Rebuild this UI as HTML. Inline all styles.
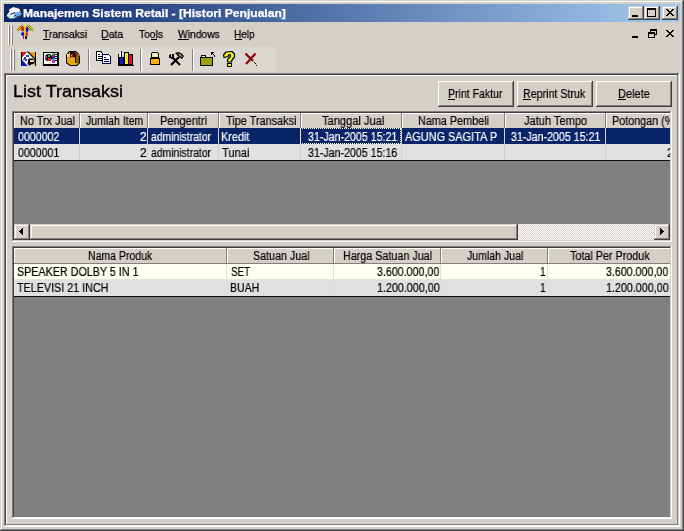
<!DOCTYPE html>
<html><head><meta charset="utf-8"><style>
html,body{margin:0;padding:0;width:684px;height:531px;overflow:hidden;background:#D4D0C8;}
body{position:relative;font-family:'Liberation Sans', sans-serif;}
div{position:absolute;will-change:transform;}
</style></head><body>
<div style="left:1px;top:1px;width:682px;height:1px;background:#FFFFFF;"></div>
<div style="left:1px;top:1px;width:1px;height:529px;background:#FFFFFF;"></div>
<div style="left:682px;top:1px;width:1px;height:529px;background:#808080;"></div>
<div style="left:1px;top:529px;width:682px;height:1px;background:#808080;"></div>
<div style="left:683px;top:0px;width:1px;height:531px;background:#404040;"></div>
<div style="left:0px;top:530px;width:684px;height:1px;background:#404040;"></div>
<div style="left:4px;top:4px;width:676px;height:18px;background:linear-gradient(to right,#0A246A,#A6CAF0);"></div>
<svg style="position:absolute;left:4px;top:4px" width="18" height="18" viewBox="0 0 18 18"><path d="M4.9 7.7 L4.9 5 L9.4 2.8 L15 4.3 L16.2 5.8 L17.7 10.3 L16.6 11.4 L10.2 14.8 L5.6 14.8 L2.3 11.4 Z" fill="#F4F8FF"/>
<path d="M10.5 9 L16.5 7 L17.7 10.3 L16.6 11.4 L10.2 14.8 L9 13 Z" fill="#70A8F0"/>
<path d="M2.3 11.4 L5.6 14.8 L7.5 14.5 L6 11 L3.5 10.5 Z" fill="#B8F0E0"/>
<path d="M4.9 7.7 L4.9 5 L9.4 2.8 L15 4.3 L16.2 5.8 L17.7 10.3 L16.6 11.4 L10.2 14.8 L5.6 14.8 L2.3 11.4 Z" fill="none" stroke="#000" stroke-width="1" stroke-dasharray="1.1 1.1"/>
<path d="M6 10.5 L11 8.5" stroke="#203070" stroke-width="1.3"/><path d="M11 11 L14 13" stroke="#000" stroke-width="1" stroke-dasharray="1 1"/></svg>
<div style="left:23.48px;top:8px;font:bold 11px/11px 'Liberation Sans', sans-serif;color:#FFFFFF;white-space:nowrap;transform:scaleX(1.0999);transform-origin:0 0;-webkit-text-stroke:0.25px #FFFFFF;">Manajemen Sistem Retail - [Histori Penjualan]</div>
<div style="left:628px;top:6px;width:16px;height:14px;background:#D4D0C8;box-shadow:inset -1px -1px #404040,inset 1px 1px #D4D0C8,inset -2px -2px #808080,inset 2px 2px #FFFFFF;"></div>
<svg style="position:absolute;left:628px;top:6px" width="16" height="14" viewBox="0 0 16 14" shape-rendering="crispEdges"><rect x="4" y="9" width="6" height="2" fill="#000"/></svg>
<div style="left:644px;top:6px;width:16px;height:14px;background:#D4D0C8;box-shadow:inset -1px -1px #404040,inset 1px 1px #D4D0C8,inset -2px -2px #808080,inset 2px 2px #FFFFFF;"></div>
<svg style="position:absolute;left:644px;top:6px" width="16" height="14" viewBox="0 0 16 14" shape-rendering="crispEdges"><rect x="3" y="2" width="9" height="9" fill="#000"/><rect x="4" y="4" width="7" height="6" fill="#D4D0C8"/></svg>
<div style="left:662px;top:6px;width:16px;height:14px;background:#D4D0C8;box-shadow:inset -1px -1px #404040,inset 1px 1px #D4D0C8,inset -2px -2px #808080,inset 2px 2px #FFFFFF;"></div>
<svg style="position:absolute;left:662px;top:6px" width="16" height="14" viewBox="0 0 16 14" shape-rendering="crispEdges"><path d="M4 3h2v1h-2zM10 3h2v1h-2zM5 4h2v1h-2zM9 4h2v1h-2zM6 5h4v1h-4zM7 6h2v1h-2zM6 7h4v1h-4zM5 8h2v1h-2zM9 8h2v1h-2zM4 9h2v1h-2zM10 9h2v1h-2z" fill="#000"/></svg>
<div style="left:8px;top:25px;width:1px;height:20px;background:#FFFFFF;"></div>
<div style="left:9px;top:25px;width:1px;height:20px;background:#808080;"></div>
<div style="left:11px;top:25px;width:1px;height:20px;background:#FFFFFF;"></div>
<div style="left:12px;top:25px;width:1px;height:20px;background:#808080;"></div>
<svg style="position:absolute;left:15px;top:23px" width="20" height="20" viewBox="0 0 20 20"><defs><pattern id="chk" width="2" height="2" patternUnits="userSpaceOnUse"><rect width="2" height="2" fill="#E8E030"/><rect width="1" height="1" fill="#707000"/><rect x="1" y="1" width="1" height="1" fill="#707000"/></pattern></defs>
<path d="M1.5 6.5 L5 2.5 L7.5 1.5 L9 3.5 L5 7.5 L2 8 Z" fill="url(#chk)"/>
<path d="M18.5 6.5 L15 2.5 L12.5 1.5 L11 3.5 L15 7.5 L18 8 Z" fill="url(#chk)"/>
<ellipse cx="7.6" cy="5.8" rx="1.6" ry="2.8" fill="#D81808"/>
<ellipse cx="12" cy="6.5" rx="1.6" ry="2.6" fill="#1010A8"/>
<ellipse cx="7.8" cy="11" rx="1.6" ry="2.1" fill="#1010C0"/>
<ellipse cx="11.6" cy="11" rx="1.5" ry="2.1" fill="#E02010"/>
<rect x="9.2" y="3" width="1.4" height="10" fill="#F0C800"/>
<rect x="8" y="13" width="1" height="3" fill="#C01010"/><rect x="10" y="13" width="2" height="3" fill="#000"/></svg>
<div style="left:43.07px;top:29px;font:normal 11px/11px 'Liberation Sans', sans-serif;color:#000;white-space:nowrap;transform:scaleX(0.9374);transform-origin:0 0;-webkit-text-stroke:0.25px #000;">Transaksi</div>
<div style="left:101.44px;top:29px;font:normal 11px/11px 'Liberation Sans', sans-serif;color:#000;white-space:nowrap;transform:scaleX(0.9596);transform-origin:0 0;-webkit-text-stroke:0.25px #000;">Data</div>
<div style="left:139.07px;top:29px;font:normal 11px/11px 'Liberation Sans', sans-serif;color:#000;white-space:nowrap;transform:scaleX(0.9341);transform-origin:0 0;-webkit-text-stroke:0.25px #000;">Tools</div>
<div style="left:178.25px;top:29px;font:normal 11px/11px 'Liberation Sans', sans-serif;color:#000;white-space:nowrap;transform:scaleX(0.9377);transform-origin:0 0;-webkit-text-stroke:0.25px #000;">Windows</div>
<div style="left:234.48px;top:29px;font:normal 11px/11px 'Liberation Sans', sans-serif;color:#000;white-space:nowrap;transform:scaleX(0.9129);transform-origin:0 0;-webkit-text-stroke:0.25px #000;">Help</div>
<div style="left:43px;top:39px;width:7px;height:1px;background:#000;"></div>
<div style="left:102px;top:39px;width:7px;height:1px;background:#000;"></div>
<div style="left:151px;top:39px;width:6px;height:1px;background:#000;"></div>
<div style="left:178px;top:39px;width:11px;height:1px;background:#000;"></div>
<div style="left:235px;top:39px;width:7px;height:1px;background:#000;"></div>
<svg style="position:absolute;left:628px;top:26px" width="52" height="16" viewBox="0 0 52 16" shape-rendering="crispEdges"><rect x="4" y="10" width="6" height="2" fill="#000"/>
<rect x="22" y="3" width="7" height="2" fill="#000"/><rect x="28" y="5" width="1" height="4" fill="#000"/><rect x="27" y="8" width="1" height="1" fill="#000"/><rect x="22" y="5" width="1" height="1" fill="#000"/>
<rect x="20" y="6" width="7" height="2" fill="#000"/><rect x="20" y="8" width="1" height="4" fill="#000"/><rect x="26" y="8" width="1" height="4" fill="#000"/><rect x="20" y="11" width="7" height="1" fill="#000"/>
<path d="M38 4h2v1h-2zM44 4h2v1h-2zM39 5h2v1h-2zM43 5h2v1h-2zM40 6h4v1h-4zM41 7h2v1h-2zM40 8h4v1h-4zM39 9h2v1h-2zM43 9h2v1h-2zM38 10h2v1h-2zM44 10h2v1h-2z" fill="#000"/></svg>
<div style="left:17px;top:47px;width:259px;height:25px;background:#DAD7D0;"></div>
<div style="left:10px;top:49px;width:1px;height:22px;background:#FFFFFF;"></div>
<div style="left:11px;top:49px;width:1px;height:22px;background:#808080;"></div>
<div style="left:13px;top:49px;width:1px;height:22px;background:#FFFFFF;"></div>
<div style="left:14px;top:49px;width:1px;height:22px;background:#808080;"></div>
<div style="left:88px;top:49px;width:1px;height:22px;background:#808080;"></div>
<div style="left:89px;top:49px;width:1px;height:22px;background:#FFFFFF;"></div>
<div style="left:140px;top:49px;width:1px;height:22px;background:#808080;"></div>
<div style="left:141px;top:49px;width:1px;height:22px;background:#FFFFFF;"></div>
<div style="left:192px;top:49px;width:1px;height:22px;background:#808080;"></div>
<div style="left:193px;top:49px;width:1px;height:22px;background:#FFFFFF;"></div>
<svg style="position:absolute;left:19px;top:49px" width="20" height="20" viewBox="0 0 20 20" shape-rendering="crispEdges"><rect x="3" y="3" width="6" height="7" fill="#E01010"/><rect x="9" y="3" width="7" height="8" fill="#F0A020"/><rect x="3" y="9" width="7" height="8" fill="#1010D0"/><rect x="10" y="10" width="6" height="6" fill="#F0C080"/><path d="M9 2 L16.5 9.5 L12 12 L11 17 L9 17 L3 11 L3 8.5 Z" fill="#FFFFFF" shape-rendering="auto"/><path d="M8.5 2.5 L16.5 10.5" stroke="#000" stroke-width="1.3" shape-rendering="auto"/><rect x="2" y="3" width="1" height="14" fill="#000"/><rect x="16" y="3" width="1" height="14" fill="#000"/><rect x="7" y="6" width="3" height="2" fill="#2040D0"/><rect x="5" y="8" width="2" height="2" fill="#2040D0"/><rect x="4" y="10" width="2" height="1" fill="#2040D0"/><rect x="6" y="10" width="2" height="2" fill="#2040D0"/><path d="M9.5 9.5 L13.5 9.5 L16 11.5 L15.5 14.5 L12 15.5 L10.5 17 L8.5 15 L9 12 Z" fill="#000" shape-rendering="auto"/><rect x="11" y="11" width="4" height="2" fill="#F8D0A0"/></svg>
<svg style="position:absolute;left:41px;top:49px" width="20" height="20" viewBox="0 0 20 20" shape-rendering="crispEdges"><rect x="2" y="3" width="16" height="14" fill="#000"/><rect x="3" y="4" width="13" height="11" fill="#FFFFFF"/><circle cx="7.5" cy="8.5" r="3.6" fill="#000" shape-rendering="auto"/><rect x="4" y="7" width="2" height="2" fill="#A040C0"/><rect x="7" y="6" width="2" height="2" fill="#40C060"/><rect x="7" y="9" width="3" height="3" fill="#E02020"/><rect x="4" y="9" width="1" height="2" fill="#607080"/><rect x="11" y="4" width="3" height="2" fill="#40C040"/><rect x="11" y="6" width="3" height="2" fill="#8020A0"/><rect x="11" y="8" width="3" height="2" fill="#2030D0"/><rect x="11" y="10" width="3" height="1" fill="#40C0E0"/><rect x="11" y="11" width="3" height="3" fill="#A040C0"/><rect x="14" y="4" width="2" height="1" fill="#FFFFFF"/><rect x="14" y="6" width="2" height="1" fill="#FFFFFF"/><rect x="14" y="8" width="2" height="1" fill="#FFFFFF"/><rect x="14" y="10" width="2" height="1" fill="#FFFFFF"/><rect x="14" y="12" width="2" height="1" fill="#FFFFFF"/><rect x="14" y="5" width="2" height="1" fill="#000"/><rect x="14" y="7" width="2" height="1" fill="#000"/><rect x="14" y="9" width="2" height="1" fill="#000"/><rect x="14" y="11" width="2" height="1" fill="#000"/></svg>
<svg style="position:absolute;left:63px;top:49px" width="20" height="20" viewBox="0 0 20 20" shape-rendering="crispEdges"><path d="M3 6 L6 2 L13 2 L16 5 L17 8 L17 14 L14 17 L7 17 L3 14 Z" fill="#000" shape-rendering="auto"/><path d="M4 7 L6.5 3 L12.5 3 L15 6 L16 8.5 L16 13.5 L13.5 16 L7.5 16 L4 13.5 Z" fill="#E8A818" shape-rendering="auto"/><rect x="4" y="5" width="3" height="3" fill="#F0E070"/><rect x="7" y="3" width="5" height="6" fill="#300808"/><rect x="8" y="5" width="2" height="4" fill="#C01818"/><rect x="8" y="6" width="1" height="1" fill="#F09090"/><rect x="13" y="5" width="3" height="9" fill="#905810"/><rect x="12" y="4" width="1" height="10" fill="#201000"/><rect x="5" y="8" width="7" height="1" fill="#C08010"/></svg>
<svg style="position:absolute;left:94px;top:49px" width="20" height="20" viewBox="0 0 20 20" shape-rendering="crispEdges"><rect x="2" y="2" width="6" height="1" fill="#000"/><rect x="2" y="2" width="1" height="10" fill="#000"/><rect x="2" y="11" width="7" height="1" fill="#000"/><rect x="8" y="4" width="1" height="8" fill="#000"/><rect x="7" y="3" width="1" height="1" fill="#000"/><rect x="3" y="3" width="4" height="8" fill="#FFFFFF"/><rect x="7" y="4" width="1" height="7" fill="#FFFFFF"/><rect x="4" y="5" width="2" height="1" fill="#000"/><rect x="4" y="7" width="4" height="1" fill="#000"/><rect x="4" y="9" width="4" height="1" fill="#000"/><rect x="8" y="5" width="7" height="1" fill="#000050"/><rect x="8" y="5" width="1" height="10" fill="#000050"/><rect x="8" y="14" width="9" height="1" fill="#000050"/><rect x="16" y="7" width="1" height="8" fill="#000050"/><rect x="15" y="6" width="1" height="1" fill="#000050"/><rect x="9" y="6" width="6" height="8" fill="#FFFFFF"/><rect x="15" y="7" width="1" height="7" fill="#FFFFFF"/><rect x="10" y="8" width="2" height="1" fill="#000050"/><rect x="10" y="10" width="5" height="1" fill="#000050"/><rect x="10" y="12" width="5" height="1" fill="#000050"/></svg>
<svg style="position:absolute;left:116px;top:49px" width="20" height="20" viewBox="0 0 20 20" shape-rendering="crispEdges"><rect x="2" y="5" width="1" height="12" fill="#000"/><rect x="2" y="16" width="16" height="1" fill="#000"/><rect x="5" y="2" width="1" height="7" fill="#000"/><rect x="3" y="6" width="1" height="10" fill="#FFFFFF"/><rect x="4" y="15" width="13" height="1" fill="#FFFFFF"/><rect x="4" y="3" width="1" height="5" fill="#FFFFFF"/><rect x="3" y="8" width="5" height="8" fill="#000"/><rect x="4" y="9" width="3" height="6" fill="#1818D0"/><rect x="8" y="3" width="5" height="13" fill="#000"/><rect x="9" y="4" width="3" height="11" fill="#F0F020"/><rect x="12" y="5" width="5" height="11" fill="#000"/><rect x="13" y="6" width="3" height="9" fill="#E01818"/><rect x="3" y="15" width="1" height="1" fill="#000"/></svg>
<svg style="position:absolute;left:147px;top:49px" width="20" height="20" viewBox="0 0 20 20" shape-rendering="crispEdges"><rect x="5" y="3" width="6" height="1" fill="#000"/><rect x="4" y="4" width="1" height="5" fill="#000"/><rect x="11" y="4" width="1" height="5" fill="#000"/><rect x="5" y="8" width="6" height="1" fill="#000"/><rect x="5" y="4" width="6" height="4" fill="#F0E8A0"/><rect x="7" y="6" width="2" height="1" fill="#FFFFFF"/><rect x="3" y="9" width="10" height="7" fill="#000"/><rect x="4" y="10" width="8" height="5" fill="#F8B010"/></svg>
<svg style="position:absolute;left:167px;top:49px" width="20" height="20" viewBox="0 0 20 20" shape-rendering="crispEdges"><path d="M6 9 L13 16" stroke="#000" stroke-width="2" shape-rendering="auto"/><rect x="2" y="6" width="2" height="3" fill="#000"/><rect x="4" y="8" width="3" height="2" fill="#000"/><rect x="5" y="5" width="2" height="3" fill="#000"/><rect x="3" y="5" width="1" height="1" fill="#000"/><path d="M12 8 L4 16" stroke="#000" stroke-width="2.2" shape-rendering="auto"/><path d="M8 4 L11 3 L14 4 L17 7 L15 10 L12 8 L10 6 Z" fill="#000" shape-rendering="auto"/><path d="M11 4.3 L13.5 5 L15.5 7.2 L14.8 8.5 L12 6.5 Z" fill="#909050" shape-rendering="auto"/></svg>
<svg style="position:absolute;left:198px;top:49px" width="20" height="20" viewBox="0 0 20 20" shape-rendering="crispEdges"><rect x="3" y="6" width="5" height="1" fill="#000"/><rect x="3" y="6" width="1" height="3" fill="#000"/><rect x="7" y="6" width="1" height="3" fill="#000"/><rect x="4" y="7" width="3" height="2" fill="#FFFFF0"/><rect x="2" y="8" width="13" height="1" fill="#000"/><rect x="2" y="8" width="1" height="9" fill="#000"/><rect x="14" y="8" width="1" height="9" fill="#000"/><rect x="2" y="16" width="13" height="1" fill="#000"/><rect x="3" y="9" width="11" height="7" fill="#A0A010"/><rect x="13" y="3" width="3" height="1" fill="#000"/><rect x="13" y="3" width="1" height="3" fill="#000"/><rect x="14" y="4" width="1" height="1" fill="#000"/><rect x="15" y="5" width="1" height="1" fill="#000"/><rect x="16" y="6" width="1" height="2" fill="#000"/></svg>
<svg style="position:absolute;left:220px;top:49px" width="20" height="20" viewBox="0 0 20 20" shape-rendering="crispEdges"><path d="M4 8.5 L3.5 6 L6 3 L12 2.5 L14.5 5 L14.5 8 L12 11 L11.5 13 L7.5 13 L7.5 10.5 L10 8 L10.5 6 L9 5.5 L8 7.5 Z" fill="#F0F020" stroke="#000" stroke-width="1.2" stroke-linejoin="round" shape-rendering="auto"/><rect x="7" y="14" width="5" height="4" fill="#000"/><rect x="8" y="15" width="3" height="2" fill="#F0F020"/></svg>
<svg style="position:absolute;left:241px;top:49px" width="20" height="20" viewBox="0 0 20 20" shape-rendering="crispEdges"><path d="M4.5 4.5 L12 12 M14.5 4.5 L5 15" stroke="#900010" stroke-width="2.2" shape-rendering="auto"/><rect x="13" y="13" width="1" height="1" fill="#200000"/><rect x="14" y="14" width="1" height="1" fill="#200000"/><rect x="15" y="16" width="1" height="1" fill="#200000"/></svg>
<div style="left:4px;top:73px;width:676px;height:1px;background:#808080;"></div>
<div style="left:4px;top:73px;width:1px;height:454px;background:#808080;"></div>
<div style="left:5px;top:74px;width:674px;height:1px;background:#404040;"></div>
<div style="left:5px;top:74px;width:1px;height:452px;background:#404040;"></div>
<div style="left:4px;top:526px;width:676px;height:1px;background:#FFFFFF;"></div>
<div style="left:679px;top:73px;width:1px;height:454px;background:#FFFFFF;"></div>
<div style="left:5px;top:525px;width:674px;height:1px;background:#F8F8F4;"></div>
<div style="left:678px;top:74px;width:1px;height:452px;background:#D4D0C8;"></div>
<div style="left:6px;top:75px;width:672px;height:1px;background:#FFFFFF;"></div>
<div style="left:6px;top:75px;width:1px;height:450px;background:#FFFFFF;"></div>
<div style="left:6px;top:524px;width:672px;height:1px;background:#808080;"></div>
<div style="left:677px;top:75px;width:1px;height:450px;background:#808080;"></div>
<div style="left:12.84px;top:84px;font:normal 16px/16px 'Liberation Sans', sans-serif;color:#000;white-space:nowrap;transform:scaleX(1.1252);transform-origin:0 0;-webkit-text-stroke:0.35px #000;">List Transaksi</div>
<div style="left:438px;top:81px;width:76px;height:26px;background:#D4D0C8;box-shadow:inset -1px -1px #404040,inset 1px 1px #FFFFFF,inset -2px -2px #808080,inset 2px 2px #D4D0C8;"></div>
<div style="left:448.42px;top:88px;font:normal 12px/12px 'Liberation Sans', sans-serif;color:#000;white-space:nowrap;transform:scaleX(0.8783);transform-origin:0 0;-webkit-text-stroke:0.2px #000;">Print Faktur</div>
<div style="left:448px;top:99px;width:7px;height:1px;background:#000;"></div>
<div style="left:517px;top:81px;width:76px;height:26px;background:#D4D0C8;box-shadow:inset -1px -1px #404040,inset 1px 1px #FFFFFF,inset -2px -2px #808080,inset 2px 2px #D4D0C8;"></div>
<div style="left:523.41px;top:88px;font:normal 12px/12px 'Liberation Sans', sans-serif;color:#000;white-space:nowrap;transform:scaleX(0.8892);transform-origin:0 0;-webkit-text-stroke:0.2px #000;">Reprint Struk</div>
<div style="left:523px;top:99px;width:8px;height:1px;background:#000;"></div>
<div style="left:596px;top:81px;width:76px;height:26px;background:#D4D0C8;box-shadow:inset -1px -1px #404040,inset 1px 1px #FFFFFF,inset -2px -2px #808080,inset 2px 2px #D4D0C8;"></div>
<div style="left:618.38px;top:88px;font:normal 12px/12px 'Liberation Sans', sans-serif;color:#000;white-space:nowrap;transform:scaleX(0.9170);transform-origin:0 0;-webkit-text-stroke:0.2px #000;">Delete</div>
<div style="left:618px;top:99px;width:8px;height:1px;background:#000;"></div>
<div style="left:12px;top:111px;width:660px;height:1px;background:#808080;"></div>
<div style="left:12px;top:111px;width:1px;height:131px;background:#808080;"></div>
<div style="left:13px;top:112px;width:658px;height:1px;background:#404040;"></div>
<div style="left:13px;top:112px;width:1px;height:129px;background:#404040;"></div>
<div style="left:12px;top:241px;width:660px;height:1px;background:#FFFFFF;"></div>
<div style="left:671px;top:111px;width:1px;height:131px;background:#FFFFFF;"></div>
<div style="left:13px;top:240px;width:658px;height:1px;background:#D4D0C8;"></div>
<div style="left:670px;top:112px;width:1px;height:129px;background:#D4D0C8;"></div>
<div style="left:14px;top:113px;width:656px;height:111px;background:#808080;"></div>
<div style="left:14px;top:113px;width:656px;height:15px;background:#D4D0C8;"></div>
<div style="left:14px;top:113px;width:66px;height:1px;background:#FFFFFF;"></div>
<div style="left:14px;top:113px;width:1px;height:15px;background:#FFFFFF;"></div>
<div style="left:79px;top:113px;width:1px;height:15px;background:#808080;"></div>
<div style="left:80px;top:113px;width:68px;height:1px;background:#FFFFFF;"></div>
<div style="left:80px;top:113px;width:1px;height:15px;background:#FFFFFF;"></div>
<div style="left:147px;top:113px;width:1px;height:15px;background:#808080;"></div>
<div style="left:148px;top:113px;width:71px;height:1px;background:#FFFFFF;"></div>
<div style="left:148px;top:113px;width:1px;height:15px;background:#FFFFFF;"></div>
<div style="left:218px;top:113px;width:1px;height:15px;background:#808080;"></div>
<div style="left:219px;top:113px;width:82px;height:1px;background:#FFFFFF;"></div>
<div style="left:219px;top:113px;width:1px;height:15px;background:#FFFFFF;"></div>
<div style="left:300px;top:113px;width:1px;height:15px;background:#808080;"></div>
<div style="left:301px;top:113px;width:101px;height:1px;background:#FFFFFF;"></div>
<div style="left:301px;top:113px;width:1px;height:15px;background:#FFFFFF;"></div>
<div style="left:401px;top:113px;width:1px;height:15px;background:#808080;"></div>
<div style="left:402px;top:113px;width:103px;height:1px;background:#FFFFFF;"></div>
<div style="left:402px;top:113px;width:1px;height:15px;background:#FFFFFF;"></div>
<div style="left:504px;top:113px;width:1px;height:15px;background:#808080;"></div>
<div style="left:505px;top:113px;width:101px;height:1px;background:#FFFFFF;"></div>
<div style="left:505px;top:113px;width:1px;height:15px;background:#FFFFFF;"></div>
<div style="left:605px;top:113px;width:1px;height:15px;background:#808080;"></div>
<div style="left:606px;top:113px;width:64px;height:1px;background:#FFFFFF;"></div>
<div style="left:606px;top:113px;width:1px;height:15px;background:#FFFFFF;"></div>
<div style="left:20.39px;top:115px;font:normal 12px/12px 'Liberation Sans', sans-serif;color:#000;white-space:nowrap;transform:scaleX(0.9074);transform-origin:0 0;-webkit-text-stroke:0.2px currentColor;">No Trx Jual</div>
<div style="left:86.12px;top:115px;font:normal 12px/12px 'Liberation Sans', sans-serif;color:#000;white-space:nowrap;transform:scaleX(0.8765);transform-origin:0 0;-webkit-text-stroke:0.2px currentColor;">Jumlah Item</div>
<div style="left:160.38px;top:115px;font:normal 12px/12px 'Liberation Sans', sans-serif;color:#000;white-space:nowrap;transform:scaleX(0.9162);transform-origin:0 0;-webkit-text-stroke:0.2px currentColor;">Pengentri</div>
<div style="left:226.07px;top:115px;font:normal 12px/12px 'Liberation Sans', sans-serif;color:#000;white-space:nowrap;transform:scaleX(0.9072);transform-origin:0 0;-webkit-text-stroke:0.2px currentColor;">Tipe Transaksi</div>
<div style="left:322.07px;top:115px;font:normal 12px/12px 'Liberation Sans', sans-serif;color:#000;white-space:nowrap;transform:scaleX(0.9261);transform-origin:0 0;-webkit-text-stroke:0.2px currentColor;">Tanggal Jual</div>
<div style="left:418.40px;top:115px;font:normal 12px/12px 'Liberation Sans', sans-serif;color:#000;white-space:nowrap;transform:scaleX(0.9025);transform-origin:0 0;-webkit-text-stroke:0.2px currentColor;">Nama Pembeli</div>
<div style="left:524.12px;top:115px;font:normal 12px/12px 'Liberation Sans', sans-serif;color:#000;white-space:nowrap;transform:scaleX(0.9210);transform-origin:0 0;-webkit-text-stroke:0.2px currentColor;">Jatuh Tempo</div>
<div style="left:0;top:115px;width:670px;height:16px;overflow:hidden;"><div style="left:612.40px;top:0;font:normal 12px/12px 'Liberation Sans', sans-serif;color:#000;white-space:nowrap;transform:scaleX(0.8988);transform-origin:0 0;-webkit-text-stroke:0.2px currentColor;">Potongan (%)</div></div>
<div style="left:14px;top:128px;width:656px;height:16px;background:#0A246A;"></div>
<div style="left:14px;top:144px;width:656px;height:16px;background:#E0E0E0;"></div>
<div style="left:14px;top:160px;width:656px;height:1px;background:#101010;"></div>
<div style="left:79px;top:128px;width:1px;height:32px;background:#D4D0C8;"></div>
<div style="left:147px;top:128px;width:1px;height:32px;background:#D4D0C8;"></div>
<div style="left:218px;top:128px;width:1px;height:32px;background:#D4D0C8;"></div>
<div style="left:300px;top:128px;width:1px;height:32px;background:#D4D0C8;"></div>
<div style="left:401px;top:128px;width:1px;height:32px;background:#D4D0C8;"></div>
<div style="left:504px;top:128px;width:1px;height:32px;background:#D4D0C8;"></div>
<div style="left:605px;top:128px;width:1px;height:32px;background:#D4D0C8;"></div>
<div style="left:300px;top:128px;width:99px;height:14px;border:1px dotted #FFFFFF;"></div>
<div style="left:17.90px;top:131px;font:normal 12px/12px 'Liberation Sans', sans-serif;color:#FFFFFF;white-space:nowrap;transform:scaleX(0.8850);transform-origin:0 0;-webkit-text-stroke:0.2px currentColor;">0000002</div>
<div style="left:139.71px;top:131px;font:normal 12px/12px 'Liberation Sans', sans-serif;color:#FFFFFF;white-space:nowrap;transform:scaleX(0.9908);transform-origin:0 0;-webkit-text-stroke:0.2px currentColor;">2</div>
<div style="left:150.87px;top:131px;font:normal 12px/12px 'Liberation Sans', sans-serif;color:#FFFFFF;white-space:nowrap;transform:scaleX(0.8653);transform-origin:0 0;-webkit-text-stroke:0.2px currentColor;">administrator</div>
<div style="left:221.39px;top:131px;font:normal 12px/12px 'Liberation Sans', sans-serif;color:#FFFFFF;white-space:nowrap;transform:scaleX(0.9058);transform-origin:0 0;-webkit-text-stroke:0.2px currentColor;">Kredit</div>
<div style="left:307.90px;top:131px;font:normal 12px/12px 'Liberation Sans', sans-serif;color:#FFFFFF;white-space:nowrap;transform:scaleX(0.8862);transform-origin:0 0;-webkit-text-stroke:0.2px currentColor;">31-Jan-2005 15:21</div>
<div style="left:405.25px;top:131px;font:normal 12px/12px 'Liberation Sans', sans-serif;color:#FFFFFF;white-space:nowrap;transform:scaleX(0.9099);transform-origin:0 0;-webkit-text-stroke:0.2px currentColor;">AGUNG SAGITA P</div>
<div style="left:510.90px;top:131px;font:normal 12px/12px 'Liberation Sans', sans-serif;color:#FFFFFF;white-space:nowrap;transform:scaleX(0.8862);transform-origin:0 0;-webkit-text-stroke:0.2px currentColor;">31-Jan-2005 15:21</div>
<div style="left:17.90px;top:147px;font:normal 12px/12px 'Liberation Sans', sans-serif;color:#000;white-space:nowrap;transform:scaleX(0.8840);transform-origin:0 0;-webkit-text-stroke:0.2px currentColor;">0000001</div>
<div style="left:139.71px;top:147px;font:normal 12px/12px 'Liberation Sans', sans-serif;color:#000;white-space:nowrap;transform:scaleX(0.9908);transform-origin:0 0;-webkit-text-stroke:0.2px currentColor;">2</div>
<div style="left:150.87px;top:147px;font:normal 12px/12px 'Liberation Sans', sans-serif;color:#000;white-space:nowrap;transform:scaleX(0.8653);transform-origin:0 0;-webkit-text-stroke:0.2px currentColor;">administrator</div>
<div style="left:222.07px;top:147px;font:normal 12px/12px 'Liberation Sans', sans-serif;color:#000;white-space:nowrap;transform:scaleX(0.9263);transform-origin:0 0;-webkit-text-stroke:0.2px currentColor;">Tunai</div>
<div style="left:307.90px;top:147px;font:normal 12px/12px 'Liberation Sans', sans-serif;color:#000;white-space:nowrap;transform:scaleX(0.8858);transform-origin:0 0;-webkit-text-stroke:0.2px currentColor;">31-Jan-2005 15:16</div>
<div style="left:0;top:147px;width:670px;height:16px;overflow:hidden;"><div style="left:666.71px;top:0;font:normal 12px/12px 'Liberation Sans', sans-serif;color:#000;white-space:nowrap;transform:scaleX(0.9908);transform-origin:0 0;-webkit-text-stroke:0.2px currentColor;">2</div></div>
<div style="left:14px;top:224px;width:16px;height:16px;background:#D4D0C8;box-shadow:inset -1px -1px #404040,inset 1px 1px #D4D0C8,inset -2px -2px #808080,inset 2px 2px #FFFFFF;"></div>
<svg style="position:absolute;left:14px;top:224px" width="16" height="16" viewBox="0 0 16 16" shape-rendering="crispEdges"><rect x="5" y="7" width="1" height="1" fill="#000"/><rect x="6" y="6" width="1" height="3" fill="#000"/><rect x="7" y="5" width="1" height="5" fill="#000"/><rect x="8" y="4" width="1" height="7" fill="#000"/></svg>
<div style="left:30px;top:224px;width:488px;height:16px;background:#D4D0C8;box-shadow:inset -1px -1px #404040,inset 1px 1px #D4D0C8,inset -2px -2px #808080,inset 2px 2px #FFFFFF;"></div>
<div style="left:518px;top:224px;width:136px;height:16px;background-color:#FFFFFF;background-image:linear-gradient(45deg,#D4D0C8 25%,transparent 25%,transparent 75%,#D4D0C8 75%),linear-gradient(45deg,#D4D0C8 25%,transparent 25%,transparent 75%,#D4D0C8 75%);background-size:2px 2px;background-position:0 0,1px 1px;"></div>
<div style="left:654px;top:224px;width:16px;height:16px;background:#D4D0C8;box-shadow:inset -1px -1px #404040,inset 1px 1px #D4D0C8,inset -2px -2px #808080,inset 2px 2px #FFFFFF;"></div>
<svg style="position:absolute;left:654px;top:224px" width="16" height="16" viewBox="0 0 16 16" shape-rendering="crispEdges"><rect x="6" y="4" width="1" height="7" fill="#000"/><rect x="7" y="5" width="1" height="5" fill="#000"/><rect x="8" y="6" width="1" height="3" fill="#000"/><rect x="9" y="7" width="1" height="1" fill="#000"/></svg>
<div style="left:12px;top:246px;width:660px;height:1px;background:#808080;"></div>
<div style="left:12px;top:246px;width:1px;height:273px;background:#808080;"></div>
<div style="left:13px;top:247px;width:658px;height:1px;background:#404040;"></div>
<div style="left:13px;top:247px;width:1px;height:271px;background:#404040;"></div>
<div style="left:12px;top:518px;width:660px;height:1px;background:#FFFFFF;"></div>
<div style="left:671px;top:246px;width:1px;height:273px;background:#FFFFFF;"></div>
<div style="left:13px;top:517px;width:658px;height:1px;background:#D4D0C8;"></div>
<div style="left:670px;top:247px;width:1px;height:271px;background:#D4D0C8;"></div>
<div style="left:14px;top:248px;width:656px;height:269px;background:#808080;"></div>
<div style="left:13px;top:517px;width:658px;height:1px;background:#F4F4F0;"></div>
<div style="left:14px;top:248px;width:656px;height:16px;background:#D4D0C8;"></div>
<div style="left:14px;top:248px;width:213px;height:1px;background:#FFFFFF;"></div>
<div style="left:14px;top:248px;width:1px;height:16px;background:#FFFFFF;"></div>
<div style="left:226px;top:248px;width:1px;height:16px;background:#808080;"></div>
<div style="left:227px;top:248px;width:107px;height:1px;background:#FFFFFF;"></div>
<div style="left:227px;top:248px;width:1px;height:16px;background:#FFFFFF;"></div>
<div style="left:333px;top:248px;width:1px;height:16px;background:#808080;"></div>
<div style="left:334px;top:248px;width:107px;height:1px;background:#FFFFFF;"></div>
<div style="left:334px;top:248px;width:1px;height:16px;background:#FFFFFF;"></div>
<div style="left:440px;top:248px;width:1px;height:16px;background:#808080;"></div>
<div style="left:441px;top:248px;width:107px;height:1px;background:#FFFFFF;"></div>
<div style="left:441px;top:248px;width:1px;height:16px;background:#FFFFFF;"></div>
<div style="left:547px;top:248px;width:1px;height:16px;background:#808080;"></div>
<div style="left:548px;top:248px;width:122px;height:1px;background:#FFFFFF;"></div>
<div style="left:548px;top:248px;width:1px;height:16px;background:#FFFFFF;"></div>
<div style="left:14px;top:263px;width:656px;height:1px;background:#808080;"></div>
<div style="left:88.42px;top:250px;font:normal 12px/12px 'Liberation Sans', sans-serif;color:#000;white-space:nowrap;transform:scaleX(0.8763);transform-origin:0 0;-webkit-text-stroke:0.2px currentColor;">Nama Produk</div>
<div style="left:252.81px;top:250px;font:normal 12px/12px 'Liberation Sans', sans-serif;color:#000;white-space:nowrap;transform:scaleX(0.8935);transform-origin:0 0;-webkit-text-stroke:0.2px currentColor;">Satuan Jual</div>
<div style="left:343.40px;top:250px;font:normal 12px/12px 'Liberation Sans', sans-serif;color:#000;white-space:nowrap;transform:scaleX(0.8955);transform-origin:0 0;-webkit-text-stroke:0.2px currentColor;">Harga Satuan Jual</div>
<div style="left:467.12px;top:250px;font:normal 12px/12px 'Liberation Sans', sans-serif;color:#000;white-space:nowrap;transform:scaleX(0.8794);transform-origin:0 0;-webkit-text-stroke:0.2px currentColor;">Jumlah Jual</div>
<div style="left:570.08px;top:250px;font:normal 12px/12px 'Liberation Sans', sans-serif;color:#000;white-space:nowrap;transform:scaleX(0.8977);transform-origin:0 0;-webkit-text-stroke:0.2px currentColor;">Total Per Produk</div>
<div style="left:14px;top:264px;width:656px;height:16px;background:#FFFFF0;"></div>
<div style="left:14px;top:280px;width:656px;height:16px;background:#E0E0E0;"></div>
<div style="left:14px;top:279px;width:656px;height:1px;background:#E4E4D8;"></div>
<div style="left:14px;top:296px;width:656px;height:1px;background:#101010;"></div>
<div style="left:226px;top:264px;width:1px;height:32px;background:#E0E0D8;"></div>
<div style="left:333px;top:264px;width:1px;height:32px;background:#E0E0D8;"></div>
<div style="left:440px;top:264px;width:1px;height:32px;background:#E0E0D8;"></div>
<div style="left:547px;top:264px;width:1px;height:32px;background:#E0E0D8;"></div>
<div style="left:16.81px;top:266px;font:normal 12px/12px 'Liberation Sans', sans-serif;color:#000;white-space:nowrap;transform:scaleX(0.8938);transform-origin:0 0;-webkit-text-stroke:0.2px currentColor;">SPEAKER DOLBY 5 IN 1</div>
<div style="left:230.85px;top:266px;font:normal 12px/12px 'Liberation Sans', sans-serif;color:#000;white-space:nowrap;transform:scaleX(0.8178);transform-origin:0 0;-webkit-text-stroke:0.2px currentColor;">SET</div>
<div style="left:376.90px;top:266px;font:normal 12px/12px 'Liberation Sans', sans-serif;color:#000;white-space:nowrap;transform:scaleX(0.8879);transform-origin:0 0;-webkit-text-stroke:0.2px currentColor;">3.600.000,00</div>
<div style="left:539.54px;top:266px;font:normal 12px/12px 'Liberation Sans', sans-serif;color:#000;white-space:nowrap;transform:scaleX(0.8462);transform-origin:0 0;-webkit-text-stroke:0.2px currentColor;">1</div>
<div style="left:605.90px;top:266px;font:normal 12px/12px 'Liberation Sans', sans-serif;color:#000;white-space:nowrap;transform:scaleX(0.8879);transform-origin:0 0;-webkit-text-stroke:0.2px currentColor;">3.600.000,00</div>
<div style="left:17.08px;top:282px;font:normal 12px/12px 'Liberation Sans', sans-serif;color:#000;white-space:nowrap;transform:scaleX(0.8968);transform-origin:0 0;-webkit-text-stroke:0.2px currentColor;">TELEVISI 21 INCH</div>
<div style="left:230.43px;top:282px;font:normal 12px/12px 'Liberation Sans', sans-serif;color:#000;white-space:nowrap;transform:scaleX(0.8740);transform-origin:0 0;-webkit-text-stroke:0.2px currentColor;">BUAH</div>
<div style="left:376.50px;top:282px;font:normal 12px/12px 'Liberation Sans', sans-serif;color:#000;white-space:nowrap;transform:scaleX(0.8937);transform-origin:0 0;-webkit-text-stroke:0.2px currentColor;">1.200.000,00</div>
<div style="left:539.54px;top:282px;font:normal 12px/12px 'Liberation Sans', sans-serif;color:#000;white-space:nowrap;transform:scaleX(0.8462);transform-origin:0 0;-webkit-text-stroke:0.2px currentColor;">1</div>
<div style="left:605.50px;top:282px;font:normal 12px/12px 'Liberation Sans', sans-serif;color:#000;white-space:nowrap;transform:scaleX(0.8937);transform-origin:0 0;-webkit-text-stroke:0.2px currentColor;">1.200.000,00</div>
</body></html>
